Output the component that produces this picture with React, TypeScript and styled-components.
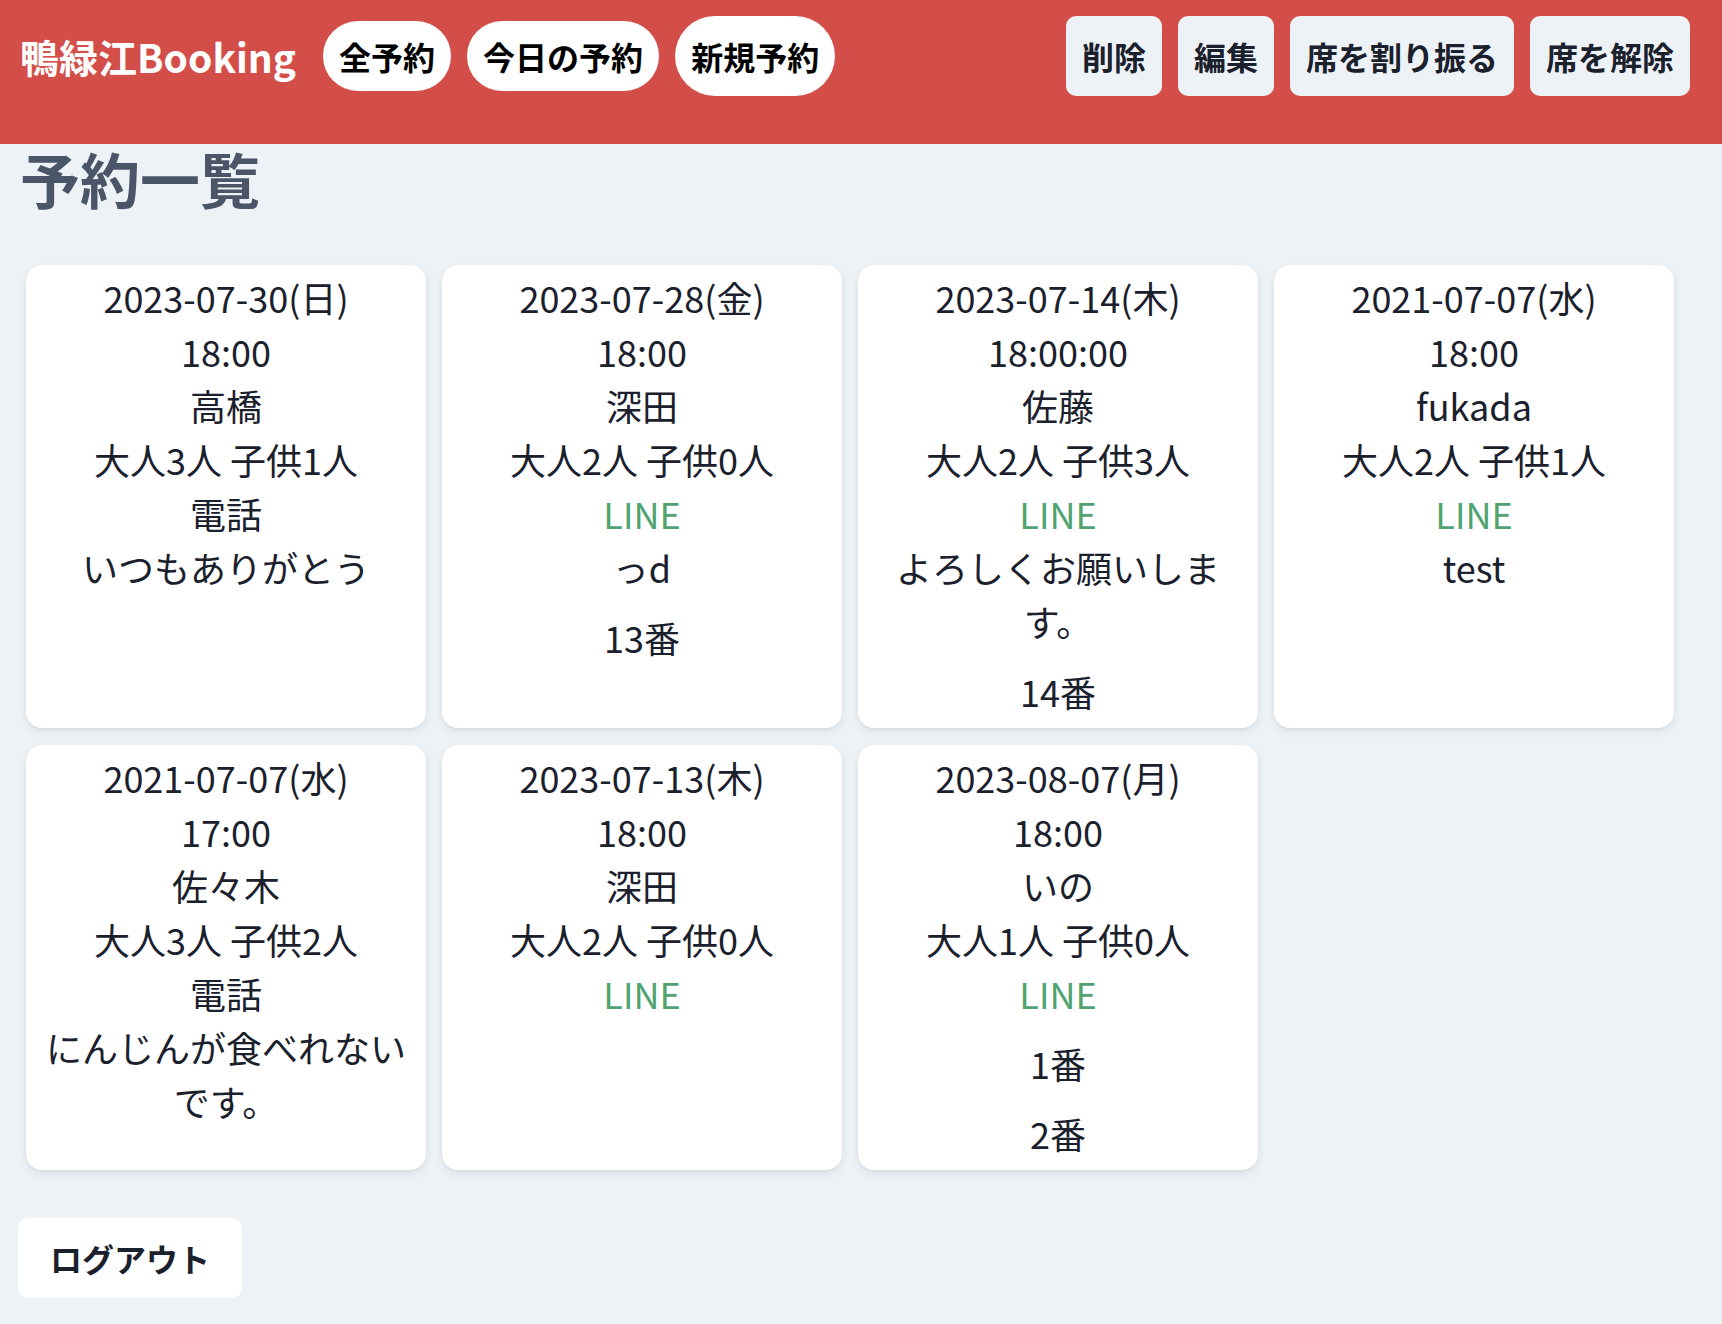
import React from "react";
import styled, { createGlobalStyle } from "styled-components";

const GlobalStyle = createGlobalStyle`
  html, body {
    margin: 0;
    padding: 0;
    background: #edf2f7;
    font-family: "Noto Sans CJK JP", "Noto Sans", sans-serif;
    color: #1a202c;
  }
  * { box-sizing: border-box; }
`;

const Header = styled.header`
  display: flex;
  align-items: center;
  justify-content: space-between;
  height: 144px;
  padding: 16px 32px 48px 20px;
  background: #d34e49;
`;

const LeftGroup = styled.div`
  display: flex;
  align-items: center;
  gap: 16px;
`;

const Logo = styled.div`
  font-size: 39px;
  font-weight: 700;
  color: #ffffff;
  line-height: 1.2;
  margin-right: 11px;
  white-space: nowrap;
`;

const NavPill = styled.button<{ $tall?: boolean }>`
  font-family: inherit;
  font-size: 32px;
  font-weight: 700;
  line-height: 48px;
  color: #000000;
  background: #ffffff;
  border: none;
  border-radius: 9999px;
  padding: ${(p) => (p.$tall ? "16px 16px" : "11px 16px")};
  white-space: nowrap;
  cursor: pointer;
`;

const RightGroup = styled.div`
  display: flex;
  align-items: center;
  gap: 16px;
`;

const ActionButton = styled.button`
  font-family: inherit;
  font-size: 32px;
  font-weight: 700;
  line-height: 48px;
  color: #1a202c;
  background: #edf2f7;
  border: none;
  border-radius: 10px;
  padding: 16px 16px;
  white-space: nowrap;
  cursor: pointer;
`;

const Main = styled.main`
  padding: 0 18px 27px 18px;
`;

const Title = styled.h1`
  margin: 0;
  padding-left: 2px;
  font-size: 60px;
  line-height: 68px;
  font-weight: 700;
  color: #4a5568;
`;

const Grid = styled.div`
  display: grid;
  grid-template-columns: repeat(4, 400px);
  gap: 17px 16px;
  padding: 53px 8px 0 8px;
`;

const Card = styled.div`
  background: #ffffff;
  border-radius: 16px;
  box-shadow: 0 4px 8px rgba(26, 32, 44, 0.08), 0 1px 3px rgba(26, 32, 44, 0.06);
  padding: 5px 16px 10px;
  text-align: center;
  font-size: 36px;
  line-height: 54px;
  color: #1a202c;
`;

const Line = styled.div<{ $green?: boolean }>`
  color: ${(p) => (p.$green ? "#50a26f" : "#1a202c")};
`;

const Seat = styled.div`
  margin-top: 16px;
`;

const LogoutButton = styled.button`
  margin-top: 48px;
  font-family: inherit;
  font-size: 32px;
  font-weight: 700;
  line-height: 48px;
  color: #1a202c;
  background: #ffffff;
  border: none;
  border-radius: 10px;
  padding: 16px 32px;
  cursor: pointer;
`;

type Booking = {
  date: string;
  time: string;
  name: string;
  adults: number;
  children: number;
  via: "電話" | "LINE";
  note?: string;
  seats?: number[];
};

const bookings: Booking[] = [
  { date: "2023-07-30(日)", time: "18:00", name: "高橋", adults: 3, children: 1, via: "電話", note: "いつもありがとう" },
  { date: "2023-07-28(金)", time: "18:00", name: "深田", adults: 2, children: 0, via: "LINE", note: "っd", seats: [13] },
  { date: "2023-07-14(木)", time: "18:00:00", name: "佐藤", adults: 2, children: 3, via: "LINE", note: "よろしくお願いします。", seats: [14] },
  { date: "2021-07-07(水)", time: "18:00", name: "fukada", adults: 2, children: 1, via: "LINE", note: "test" },
  { date: "2021-07-07(水)", time: "17:00", name: "佐々木", adults: 3, children: 2, via: "電話", note: "にんじんが食べれないです。" },
  { date: "2023-07-13(木)", time: "18:00", name: "深田", adults: 2, children: 0, via: "LINE" },
  { date: "2023-08-07(月)", time: "18:00", name: "いの", adults: 1, children: 0, via: "LINE", seats: [1, 2] },
];

export default function App() {
  return (
    <>
      <GlobalStyle />
      <Header>
        <LeftGroup>
          <Logo>鴨緑江Booking</Logo>
          <NavPill>全予約</NavPill>
          <NavPill>今日の予約</NavPill>
          <NavPill $tall>新規予約</NavPill>
        </LeftGroup>
        <RightGroup>
          <ActionButton>削除</ActionButton>
          <ActionButton>編集</ActionButton>
          <ActionButton>席を割り振る</ActionButton>
          <ActionButton>席を解除</ActionButton>
        </RightGroup>
      </Header>
      <Main>
        <Title>予約一覧</Title>
        <Grid>
          {bookings.map((b, i) => (
            <Card key={i}>
              <Line>{b.date}</Line>
              <Line>{b.time}</Line>
              <Line>{b.name}</Line>
              <Line>
                大人{b.adults}人 子供{b.children}人
              </Line>
              <Line $green={b.via === "LINE"}>{b.via}</Line>
              {b.note && <Line>{b.note}</Line>}
              {b.seats?.map((s) => (
                <Seat key={s}>{s}番</Seat>
              ))}
            </Card>
          ))}
        </Grid>
        <LogoutButton>ログアウト</LogoutButton>
      </Main>
    </>
  );
}
